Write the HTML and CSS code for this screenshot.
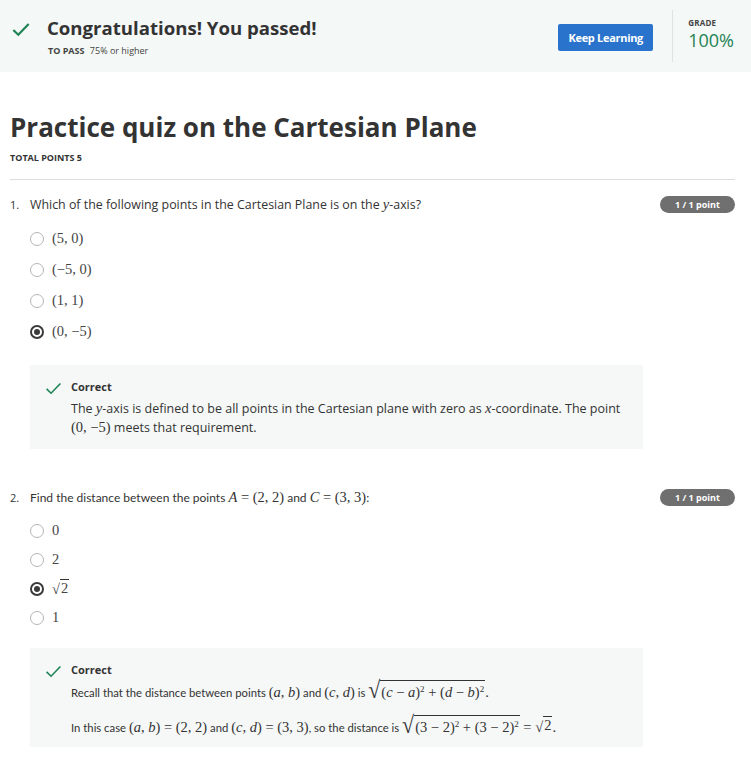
FILE: index.html
```html
<!DOCTYPE html>
<html>
<head>
<meta charset="utf-8">
<link rel="stylesheet" href="styles.css">
</head>
<body>
<header class="banner">
  <div class="banner-left">
    <div class="banner-title-row">
      <svg class="check big" viewBox="0 0 20 16" width="18" height="15"><path d="M1.5 8.5 L7 13.8 L18.5 1.8" fill="none" stroke="#1f8354" stroke-width="2.4"/></svg>
      <h2 class="banner-title">Congratulations! You passed!</h2>
    </div>
    <div class="to-pass"><b>TO PASS</b> 75% or higher</div>
  </div>
  <div class="banner-right">
    <button class="btn">Keep Learning</button>
    <div class="sep"></div>
    <div class="grade">
      <div class="grade-label">GRADE</div>
      <div class="grade-value">100%</div>
    </div>
  </div>
</header>

<main class="content">
  <h1 class="quiz-title">Practice quiz on the Cartesian Plane</h1>
  <div class="total">TOTAL POINTS 5</div>
  <hr class="rule">

  <section class="q q1">
    <div class="q-head">
      <span class="q-num">1.</span>
      <span class="q-text">Which of the following points in the Cartesian Plane is on the <i class="m">y</i>-axis?</span>
      <span class="badge">1 / 1 point</span>
    </div>
    <ul class="opts">
      <li><span class="radio"></span><span class="m">(5, 0)</span></li>
      <li><span class="radio"></span><span class="m">(−5, 0)</span></li>
      <li><span class="radio"></span><span class="m">(1, 1)</span></li>
      <li><span class="radio on"></span><span class="m">(0, −5)</span></li>
    </ul>
    <div class="fb">
      <svg class="check" viewBox="0 0 20 16" width="17" height="13"><path d="M1.5 8.5 L7 13.8 L18.5 1.8" fill="none" stroke="#1f8354" stroke-width="2"/></svg>
      <div class="fb-body">
        <div class="fb-title">Correct</div>
        <p class="fb-text">The <i class="m">y</i>-axis is defined to be all points in the Cartesian plane with zero as <i class="m">x</i>-coordinate. The point <span class="m">(0, −5)</span> meets that requirement.</p>
      </div>
    </div>
  </section>

  <section class="q q2">
    <div class="q-head">
      <span class="q-num">2.</span>
      <span class="q-text alt">Find the distance between the points <span class="m"><i>A</i> = (2, 2)</span> and <span class="m"><i>C</i> = (3, 3)</span>:</span>
      <span class="badge">1 / 1 point</span>
    </div>
    <ul class="opts tight">
      <li><span class="radio"></span><span class="m">0</span></li>
      <li><span class="radio"></span><span class="m">2</span></li>
      <li><span class="radio on"></span><span class="m"><span class="sqrt"><span class="rad">√</span><span class="under">2</span></span></span></li>
      <li><span class="radio"></span><span class="m">1</span></li>
    </ul>
    <div class="fb fb2">
      <svg class="check" viewBox="0 0 20 16" width="17" height="13"><path d="M1.5 8.5 L7 13.8 L18.5 1.8" fill="none" stroke="#1f8354" stroke-width="2"/></svg>
      <div class="fb-body">
        <div class="fb-title">Correct</div>
        <p class="fb-line first">Recall that the distance between points <span class="m">(<i>a</i>, <i>b</i>)</span> and <span class="m">(<i>c</i>, <i>d</i>)</span> is <span class="m"><span class="sqrt"><span class="rad big">√</span><span class="under tall">(<i>c</i> − <i>a</i>)<sup>2</sup> + (<i>d</i> − <i>b</i>)<sup>2</sup></span></span>.</span></p>
        <p class="fb-line">In this case <span class="m">(<i>a</i>, <i>b</i>) = (2, 2)</span> and <span class="m">(<i>c</i>, <i>d</i>) = (3, 3)</span>, so the distance is <span class="m"><span class="sqrt"><span class="rad big">√</span><span class="under tall">(3 − 2)<sup>2</sup> + (3 − 2)<sup>2</sup></span></span> = <span class="sqrt"><span class="rad">√</span><span class="under">2</span></span>.</span></p>
      </div>
    </div>
  </section>
</main>
</body>
</html>
```
FILE: styles.css
```css
* { box-sizing: border-box; }
body {
  margin: 0;
  font-family: "Open Sans", "DejaVu Sans", sans-serif;
  color: #1f1f1f;
  background: #fff;
}
.banner {
  height: 72px;
  background: #f4f8f7;
  display: flex;
  justify-content: space-between;
  padding: 0 17px 0 12px;
}
.banner-left { padding-top: 15px; }
.banner-title-row { display: flex; align-items: center; }
.check.big { margin-right: 17px; margin-top: 3px; }
.banner-title {
  margin: 0;
  font-size: 18.6px;
  line-height: 26px;
  font-weight: 700;
  color: #333;
}
.to-pass {
  margin: 3px 0 0 36px;
  font-size: 9px;
  color: #444;
}
.to-pass b { font-weight: 700; margin-right: 3px; }
.banner-right { display: flex; align-items: center; }
.btn {
  width: 95px;
  height: 27px;
  border: 0;
  border-radius: 2px;
  background: #2a73cc;
  color: #fff;
  font-family: "Open Sans", sans-serif;
  font-size: 11px;
  font-weight: 700;
  letter-spacing: -0.3px;
  margin-top: 3px;
}
.sep {
  width: 1px;
  height: 52px;
  background: #dde3e1;
  margin: 0 15px 0 19px;
}
.grade { padding-bottom: 2px; }
.grade-label { font-size: 8px; font-weight: 700; color: #444; line-height: 10px; letter-spacing: 0.2px; }
.grade-value { font-size: 18px; color: #1f8354; line-height: 24px; }

.content { padding: 0 16px 0 10px; }
.quiz-title {
  margin: 39px 0 0;
  font-size: 26px;
  line-height: 32px;
  font-weight: 700;
  color: #333;
}
.total {
  margin-top: 8px;
  font-size: 9px;
  font-weight: 700;
  color: #333;
}
.rule {
  margin: 15px 0 0;
  border: 0;
  border-top: 1px solid #ddd;
}
.q-head {
  display: flex;
  align-items: center;
}
.q1 .q-head { margin-top: 16px; }
.q-num { width: 20px; font-size: 11px; color: #333; }
.q-text { flex: 1; font-size: 12.4px; color: #333; }
.q-text.alt { font-family: Lato, "Open Sans", sans-serif; font-size: 12px; }
.badge {
  background: #6f6f6f;
  color: #fff;
  font-size: 9px;
  font-weight: 700;
  border-radius: 9px;
  width: 75px;
  height: 17px;
  line-height: 17px;
  text-align: center;
}
.m { font-family: "Liberation Serif", "DejaVu Serif", serif; font-size: 14.5px; white-space: nowrap; }
i.m, .m i { font-style: italic; }
.m sup { font-size: 9px; vertical-align: 5px; line-height: 0; }
.opts { list-style: none; margin: 10px 0 0; padding: 0 0 0 20px; }
.opts li { display: flex; align-items: center; height: 31px; color: #444; }
.opts.tight li { height: 29px; }
.radio {
  width: 14px; height: 14px;
  border: 1px solid #b5b5b5;
  border-radius: 50%;
  margin-right: 8px;
  position: relative;
}
.radio.on { border: 2px solid #3a3a3a; }
.radio.on::after {
  content: "";
  position: absolute;
  left: 2px; top: 2px;
  width: 6px; height: 6px;
  border-radius: 50%;
  background: #3a3a3a;
}
.fb {
  margin: 18px 92px 0 20px;
  background: #f5f8f7;
  display: flex;
  padding: 14px 6px 12px 15px;
  min-height: 83px;
}
.fb .check { margin-right: 9px; margin-top: 3px; flex: none; }
.fb-title { font-size: 11px; font-weight: 700; color: #333; line-height: 16px; }
.fb-text { margin: 4px 0 0; font-size: 12.5px; line-height: 19px; color: #333; }
.q2 .q-head { margin-top: 40px; }
.q2 .opts { margin-top: 10px; }
.fb2 { margin-top: 16px; min-height: 98px; padding-top: 14px; padding-bottom: 8px; }
.fb-line { margin: 10px 0 0; font-family: Lato, "Open Sans", sans-serif; font-size: 11.3px; line-height: 22px; color: #333; }
.fb-line.first { margin-top: 1px; }
.sqrt { display: inline-flex; align-items: flex-end; }
.rad { font-size: 14.5px; line-height: 1; }
.rad.big { font-size: 22px; transform: scaleY(1.1); }
.under { border-top: 1px solid #333; padding: 0 1px; line-height: 1.2; }
.under.tall { padding-top: 3px; }
```
